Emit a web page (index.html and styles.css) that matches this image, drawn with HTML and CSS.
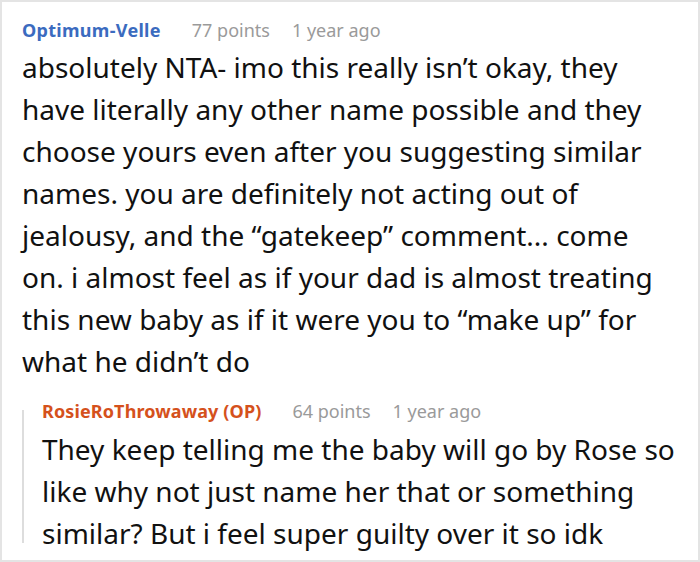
FILE: index.html
```html
<!DOCTYPE html>
<html lang="en">
<head>
<meta charset="utf-8">
<link rel="stylesheet" href="styles.css">
</head>
<body>
<div class="card">
  <div class="comment">
    <div class="meta">
      <span class="author">Optimum-Velle</span>
      <span class="points">77 points</span>
      <span class="time">1 year ago</span>
    </div>
    <p class="text main-text">absolutely NTA- imo this really isn’t okay, they have literally any other name possible and they choose yours even after you suggesting similar names. you are definitely not acting out of jealousy, and the “gatekeep” comment... come on. i almost feel as if your dad is almost treating this new baby as if it were you to “make up” for what he didn’t do</p>
  </div>
  <div class="reply">
    <div class="meta">
      <span class="author op">RosieRoThrowaway (OP)</span>
      <span class="points">64 points</span>
      <span class="time">1 year ago</span>
    </div>
    <p class="text">They keep telling me the baby will go by Rose so like why not just name her that or something similar? But i feel super guilty over it so idk</p>
  </div>
</div>
</body>
</html>
```

FILE: styles.css
```css
html, body {
  margin: 0;
  padding: 0;
  background: #ffffff;
}
body {
  font-family: "Noto Sans", "Open Sans", sans-serif;
  color: #111111;
}
.card {
  box-sizing: border-box;
  width: 700px;
  height: 562px;
  border: 2px solid #e4e4e4;
  padding: 16px 20px 0 20px;
  overflow: hidden;
}
.meta {
  display: flex;
  align-items: baseline;
  font-size: 18px;
  line-height: 24px;
  white-space: nowrap;
}
.author {
  font-weight: 700;
  color: #3b6bbf;
  letter-spacing: 0.3px;
}
.author.op {
  color: #d5511c;
  letter-spacing: 0.12px;
}
.points {
  color: #9a9a9a;
  margin-left: 31px;
}
.time {
  color: #9a9a9a;
  margin-left: 22px;
}
.text {
  margin: 4px 0 0 0;
  font-size: 28px;
  line-height: 42px;
  color: #111111;
}
.main-text {
  max-width: 640px;
}
.reply {
  margin-top: 17px;
  padding-left: 20px;
  background: linear-gradient(#dddddd, #dddddd) no-repeat 0 11px / 2px calc(100% - 22px);
}
.reply .text {
  margin-top: 5px;
}
```
